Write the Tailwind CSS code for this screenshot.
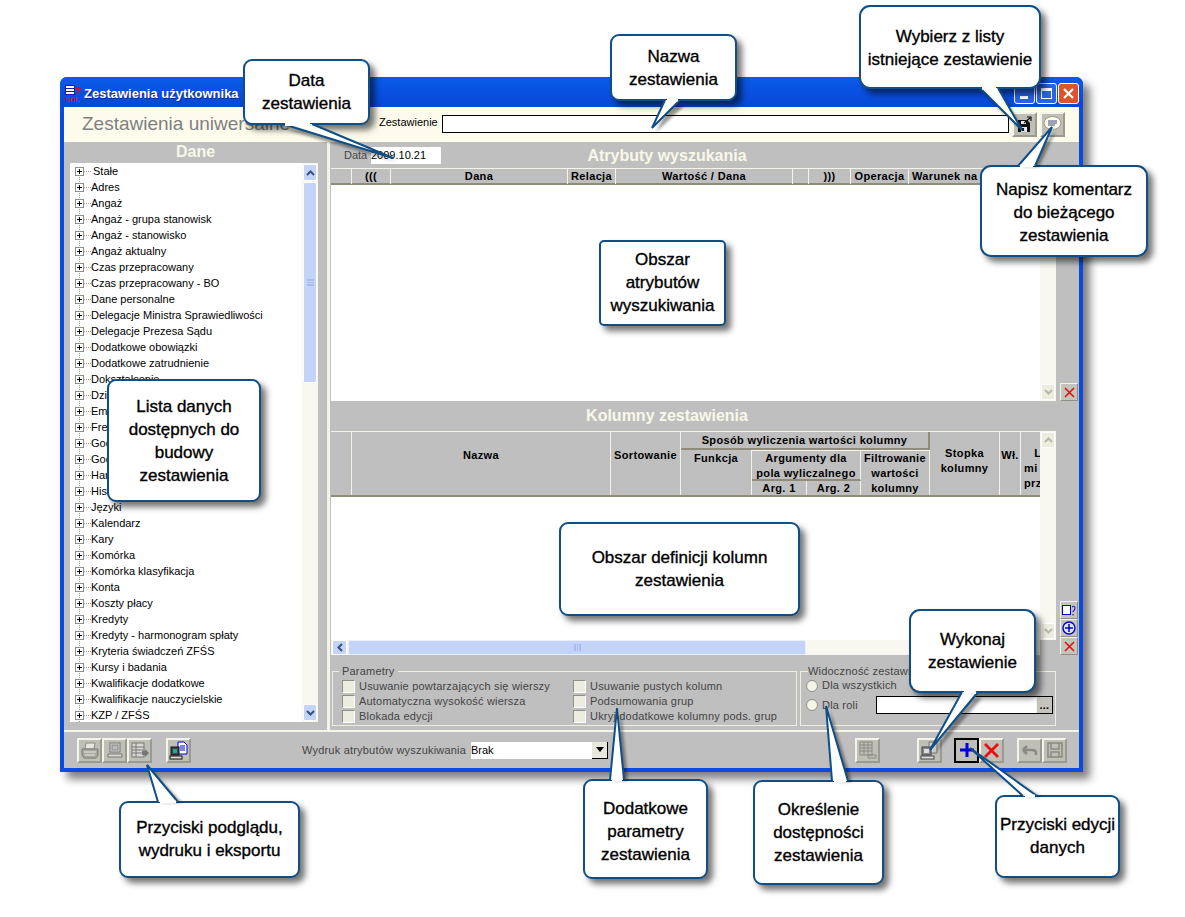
<!DOCTYPE html>
<html lang="pl">
<head>
  <meta charset="UTF-8" />
  <title>Zestawienia użytkownika</title>
  <script src="https://cdn.jsdelivr.net/npm/@tailwindcss/browser@4"></script>
</head>
<body class="bg-white font-['Liberation_Sans',Arial,sans-serif]">
<div class="relative w-[1185px] h-[917px] overflow-hidden bg-white pl-[60px] pt-[77px]">

  <!-- Window -->
  <div class="w-[1023px] h-[695px] flex flex-col border-x-4 border-b-4 border-[#0b4ce0] rounded-t-[7px] bg-[#bfbfbf] shadow-[7px_7px_8px_rgba(0,0,0,0.5)]">

    <!-- Title bar -->
    <div class="h-[30px] -mx-[4px] px-[5px] pt-[3px] flex items-center rounded-t-[7px] bg-gradient-to-b from-[#0a5ce8] via-[#0a50e0] to-[#0748d8]">
      <svg width="16" height="17" viewBox="0 0 16 17" class="mr-[3px]">
        <rect x="0.500" y="0.500" width="9" height="9" fill="#fff" stroke="#1a1aa0"/>
        <path d="M0 3.500h10M0 6.500h10" stroke="#1a1aa0"/>
        <path d="M11 4q2-2 4 0q0 2-2 3v2" stroke="#e01010" stroke-width="1.500" fill="none"/>
        <text x="0" y="16.500" font-size="7" font-weight="700" fill="#e01010" font-family="Liberation Sans">SQL</text>
      </svg>
      <span class="text-[13px] font-bold text-white [text-shadow:1px_1px_0_#0a2a90]">Zestawienia użytkownika</span>
      <div class="ml-auto flex gap-[1px] mt-[-1px] mr-[-1px]">
        <div class="w-[21px] h-[21px] rounded-[3px] border border-white bg-[#2a62e8] flex items-end pl-[5px] pb-[4px]"><div class="w-[8px] h-[3px] bg-white"></div></div>
        <div class="w-[21px] h-[21px] rounded-[3px] border border-white bg-[#2a62e8] flex items-center justify-center"><div class="w-[11px] h-[11px] border border-t-[3px] border-white"></div></div>
        <div class="w-[21px] h-[21px] rounded-[3px] border border-white bg-[#e0522c] flex items-center justify-center">
          <svg width="13" height="13" viewBox="0 0 13 13"><path d="M2 2l9 9M11 2l-9 9" stroke="#fff" stroke-width="2.200"/></svg>
        </div>
      </div>
    </div>

    <!-- Header -->
    <div class="h-[35px] bg-[#fdfcec] flex items-center">
      <span class="ml-[18px] w-[297px] text-[19px] text-[#808080] leading-none mt-[-2px]">Zestawienia uniwersalne</span>
      <span class="text-[11px] text-black w-[63px] mt-[-5px]">Zestawienie</span>
      <div class="w-[567px] h-[18px] bg-white border border-black mt-[-1px]"></div>
      <button class="ml-[3px] w-[25px] h-[25px] mt-[-1px] bg-[#bfbfb8] border-2 border-t-[#f4f4e8] border-l-[#f4f4e8] border-r-[#9a9a90] border-b-[#9a9a90] flex items-center justify-center">
        <svg width="15" height="16" viewBox="0 0 15 16"><path d="M1 4h9l3 3v9H1z" fill="#111"/><rect x="4" y="5" width="5" height="3" fill="#eee"/><rect x="4" y="11" width="6" height="5" fill="#eee"/><rect x="5" y="12" width="2" height="3" fill="#111"/><path d="M7 7l6-5M10 1h4v4" stroke="#111" stroke-width="1.200" fill="none"/></svg>
      </button>
      <button class="ml-[3px] w-[25px] h-[25px] mt-[-1px] bg-[#bfbfb8] border-2 border-t-[#f4f4e8] border-l-[#f4f4e8] border-r-[#9a9a90] border-b-[#9a9a90] flex items-center justify-center">
        <svg width="19" height="16" viewBox="0 0 19 16"><ellipse cx="9.500" cy="7" rx="8.500" ry="6.500" fill="#fbfbe8" stroke="#9a9a8c"/><path d="M5 5h9M5 7h9M5 9h7" stroke="#3a4a80"/><path d="M8 13l-1 3 4-3" fill="#fbfbe8" stroke="#9a9a8c"/></svg>
      </button>
    </div>

    <!-- Main -->
    <div class="flex h-[590px] border-b-2 border-[#f4f4e8]">

      <!-- Dane -->
      <div class="w-[263px] flex flex-col">
        <div class="h-[21px] text-center text-[16px] font-bold text-[#f8f8e8] leading-[20px]">Dane</div>
        <div class="ml-[6px] w-[248px] h-[559px] bg-white flex overflow-hidden">
          <div id="tree" class="w-[232px] relative">
            <div class="absolute left-[9px] top-[4px] bottom-0 border-l border-dotted border-[#999]"></div>
          </div>
          <div class="w-[16px] bg-[#f8f8f0] flex flex-col">
            <div class="h-[17px] m-[1px] mb-0 rounded-[2px] bg-[#c4d4f8] border border-white flex items-center justify-center">
              <svg width="9" height="6" viewBox="0 0 9 6"><path d="M1 5l3.500-3.500L8 5" stroke="#36507e" stroke-width="2" fill="none"/></svg>
            </div>
            <div class="h-[201px] m-[1px] rounded-[2px] bg-[#c4d4f8] border border-white flex items-center justify-center">
              <div class="w-[7px] h-[7px] border-y-2 border-[#a8bcf0] bg-[linear-gradient(#a8bcf0,#a8bcf0)] bg-[length:100%_1px] bg-center bg-no-repeat"></div>
            </div>
            <div class="mt-auto h-[17px] m-[1px] rounded-[2px] bg-[#c4d4f8] border border-white flex items-center justify-center">
              <svg width="9" height="6" viewBox="0 0 9 6"><path d="M1 1l3.500 3.500L8 1" stroke="#36507e" stroke-width="2" fill="none"/></svg>
            </div>
          </div>
        </div>
      </div>

      <!-- Right side -->
      <div class="w-[752px] border-l-[3px] border-[#f4f4e8] pl-[1px] flex flex-col">

        <!-- Attributes -->
        <div class="h-[26px] flex items-center">
          <span class="ml-[13px] w-[27px] text-[11px] text-[#444]">Data</span>
          <div class="w-[70px] h-[17px] bg-white text-[11px] text-black leading-[17px]">2009.10.21</div>
          <div class="w-[452px] text-center text-[16px] font-bold text-[#f8f8e8] mt-[1px]">Atrybuty wyszukania</div>
        </div>
        <div class="flex h-[233px]">
          <div class="w-[709px] flex flex-col">
            <div class="h-[17px] grid grid-cols-[21px_39px_177px_48px_177px_16px_42px_58px_111px] text-[11px] tracking-[0.35px] font-bold text-black text-center leading-[15px] border-t border-[#f4f4e8] border-b-2 border-b-[#8f8c7c]">
              <div class="border-r border-[#f4f4e8]"></div>
              <div class="border-r border-[#f4f4e8]">(((</div>
              <div class="border-r border-[#f4f4e8]">Dana</div>
              <div class="border-r border-[#f4f4e8]">Relacja</div>
              <div class="border-r border-[#f4f4e8]">Wartość / Dana</div>
              <div class="border-r border-[#f4f4e8]"></div>
              <div class="border-r border-[#f4f4e8]">)))</div>
              <div class="border-r border-[#f4f4e8]">Operacja</div>
              <div class="text-left pl-[3px] whitespace-nowrap">Warunek na</div>
            </div>
            <div class="flex-1 bg-white"></div>
          </div>
          <div class="w-[16px] bg-[#f8f8f0] flex flex-col justify-end pt-[17px]">
            <div class="h-[16px] mb-[1px] mx-[1px] rounded-[2px] bg-[#ededdf] border border-white flex items-center justify-center">
              <svg width="9" height="6" viewBox="0 0 9 6"><path d="M1 1l3.500 3.500L8 1" stroke="#b8b8ac" stroke-width="2" fill="none"/></svg>
            </div>
          </div>
          <div class="flex-1 flex flex-col justify-end pl-[4px]">
            <button class="w-[18px] h-[18px] bg-[#c4c4bc] border border-t-[#f4f4e8] border-l-[#f4f4e8] border-r-[#8f8f85] border-b-[#8f8f85] flex items-center justify-center">
              <svg width="11" height="11" viewBox="0 0 11 11"><path d="M1 1l9 9M10 1l-9 9" stroke="#e01010" stroke-width="1.600"/></svg>
            </button>
          </div>
        </div>

        <!-- Columns -->
        <div class="h-[30px] w-[672px] text-center text-[16px] font-bold text-[#f8f8e8] leading-[30px]">Kolumny zestawienia</div>
        <div class="flex h-[224px]">
          <div class="w-[709px] flex flex-col">
            <div class="h-[66px] grid grid-cols-[21px_259px_70px_71px_55px_54px_69px_70px_21px_19px] grid-rows-[18px_31px_17px] text-[11px] tracking-[0.35px] font-bold text-black text-center leading-[15px] overflow-hidden border-t border-[#f4f4e8] border-b-2 border-b-[#8f8c7c]">
              <div class="row-span-3 border-r border-[#f4f4e8]"></div>
              <div class="row-span-3 border-r border-[#f4f4e8] flex items-center justify-center pb-[20px]">Nazwa</div>
              <div class="row-span-3 border-r border-[#f4f4e8] flex items-center justify-center pb-[20px]">Sortowanie</div>
              <div class="col-span-4 border-r-2 border-r-[#8f8c7c] border-b-2 border-b-[#8f8c7c] pt-[1px]">Sposób wyliczenia wartości kolumny</div>
              <div class="row-span-3 border-r border-[#f4f4e8] flex items-center justify-center pb-[8px]">Stopka<br>kolumny</div>
              <div class="row-span-3 border-r border-[#f4f4e8] flex items-center justify-center pb-[20px]">Wł.</div>
              <div class="row-span-3 pt-[14px] text-left pl-[3px] whitespace-nowrap overflow-hidden">&nbsp;&nbsp;&nbsp;L<br>mi<br>prz</div>
              <div class="row-span-2 border-r border-[#f4f4e8] pt-[1px]">Funkcja</div>
              <div class="col-span-2 border-t border-t-[#f4f4e8] border-r border-r-[#f4f4e8] border-b-2 border-b-[#8f8c7c]">Argumenty dla<br>pola wyliczalnego</div>
              <div class="row-span-2 border-t border-t-[#f4f4e8] border-r border-r-[#f4f4e8]">Filtrowanie<br>wartości<br>kolumny</div>
              <div class="border-r border-[#f4f4e8] leading-[15px]">Arg. 1</div>
              <div class="border-r border-[#f4f4e8] leading-[15px]">Arg. 2</div>
            </div>
            <div class="h-[143px] bg-white"></div>
            <div class="h-[15px] flex bg-[#f8f8f0]">
              <div class="w-[15px] mx-[1px] rounded-[2px] bg-[#c4d4f8] border border-white flex items-center justify-center">
                <svg width="6" height="9" viewBox="0 0 6 9"><path d="M5 1L1.500 4.500 5 8" stroke="#36507e" stroke-width="2" fill="none"/></svg>
              </div>
              <div class="w-[458px] rounded-[2px] bg-[#c4d4f8] border border-[#e8eefc] flex items-center justify-center">
                <div class="w-[7px] h-[7px] border-x-2 border-[#a8bcf0] bg-[linear-gradient(#a8bcf0,#a8bcf0)] bg-[length:1px_100%] bg-center bg-no-repeat"></div>
              </div>
            </div>
          </div>
          <div class="w-[16px] h-[209px] bg-[#f8f8f0] flex flex-col justify-between">
            <div class="h-[16px] m-[1px] rounded-[2px] bg-[#ededdf] border border-white flex items-center justify-center">
              <svg width="9" height="6" viewBox="0 0 9 6"><path d="M1 5l3.500-3.500L8 5" stroke="#b8b8ac" stroke-width="2" fill="none"/></svg>
            </div>
            <div class="h-[16px] m-[1px] rounded-[2px] bg-[#ededdf] border border-white flex items-center justify-center">
              <svg width="9" height="6" viewBox="0 0 9 6"><path d="M1 1l3.500 3.500L8 1" stroke="#b8b8ac" stroke-width="2" fill="none"/></svg>
            </div>
          </div>
          <div class="flex-1 flex flex-col justify-end pl-[4px]">
            <button class="w-[18px] h-[18px] bg-[#c4c4bc] border border-t-[#f4f4e8] border-l-[#f4f4e8] border-r-[#8f8f85] border-b-[#8f8f85] flex items-center justify-center">
              <svg width="14" height="12" viewBox="0 0 14 12"><rect x="0.500" y="1.500" width="8" height="9" fill="#fff" stroke="#0000c0"/><path d="M10 3q3-2 3 1t-2 3v1M11 10v1.500" stroke="#0000c0" fill="none"/></svg>
            </button>
            <button class="w-[18px] h-[18px] bg-[#c4c4bc] border border-t-[#f4f4e8] border-l-[#f4f4e8] border-r-[#8f8f85] border-b-[#8f8f85] flex items-center justify-center">
              <svg width="14" height="14" viewBox="0 0 14 14"><circle cx="7" cy="7" r="6" fill="#dfe6ff" stroke="#0000c8" stroke-width="1.400"/><path d="M7 3v8M3 7h8" stroke="#0000c8" stroke-width="1.500"/></svg>
            </button>
            <button class="w-[18px] h-[18px] bg-[#c4c4bc] border border-t-[#f4f4e8] border-l-[#f4f4e8] border-r-[#8f8f85] border-b-[#8f8f85] flex items-center justify-center">
              <svg width="11" height="11" viewBox="0 0 11 11"><path d="M1 1l9 9M10 1l-9 9" stroke="#e01010" stroke-width="1.600"/></svg>
            </button>
          </div>
        </div>

        <!-- Groups -->
        <div class="flex gap-[3px] mt-[10px] text-[11px] tracking-[0.2px] text-[#444] leading-[15px]">
          <fieldset class="ml-[1px] w-[465px] h-[61px] border border-[#eeeee0] px-[9px] pt-[1px]">
            <legend class="-ml-[3px] px-[3px] leading-[13px]">Parametry</legend>
            <div class="grid grid-cols-[231px_1fr]">
              <label class="flex items-center gap-[4px]"><span class="w-[13px] h-[13px] bg-[#ecece0] border border-t-[#8f8f85] border-l-[#8f8f85] border-white"></span>Usuwanie powtarzających się wierszy</label>
              <label class="flex items-center gap-[4px]"><span class="w-[13px] h-[13px] bg-[#ecece0] border border-t-[#8f8f85] border-l-[#8f8f85] border-white"></span>Usuwanie pustych kolumn</label>
              <label class="flex items-center gap-[4px]"><span class="w-[13px] h-[13px] bg-[#ecece0] border border-t-[#8f8f85] border-l-[#8f8f85] border-white"></span>Automatyczna wysokość wiersza</label>
              <label class="flex items-center gap-[4px]"><span class="w-[13px] h-[13px] bg-[#ecece0] border border-t-[#8f8f85] border-l-[#8f8f85] border-white"></span>Podsumowania grup</label>
              <label class="flex items-center gap-[4px]"><span class="w-[13px] h-[13px] bg-[#ecece0] border border-t-[#8f8f85] border-l-[#8f8f85] border-white"></span>Blokada edycji</label>
              <label class="flex items-center gap-[4px]"><span class="w-[13px] h-[13px] bg-[#ecece0] border border-t-[#8f8f85] border-l-[#8f8f85] border-white"></span>Ukryj dodatkowe kolumny pods. grup</label>
            </div>
          </fieldset>
          <fieldset class="w-[256px] h-[61px] border border-[#eeeee0] pl-[5px]">
            <legend class="ml-[2px] leading-[13px]">Widoczność zestawienia</legend>
            <div class="flex items-center gap-[4px] h-[15px]"><span class="w-[12px] h-[12px] rounded-full bg-[#f4f4e8] border border-[#8f8f85]"></span>Dla wszystkich</div>
            <div class="flex items-center gap-[4px] mt-[3px] h-[18px]">
              <span class="w-[12px] h-[12px] rounded-full bg-[#f4f4e8] border border-[#8f8f85]"></span><span class="w-[50px]">Dla roli</span>
              <div class="w-[177px] h-[18px] bg-white border border-black flex justify-end">
                <div class="w-[16px] bg-[#c4c4bc] border-l border-[#f4f4e8] text-black text-[11px] font-bold text-center leading-[17px]">...</div>
              </div>
            </div>
          </fieldset>
        </div>
      </div>
    </div>

    <!-- Bottom bar -->
    <div class="flex-1 flex items-center pl-[13px] text-[11px] text-[#444]">
      <button class="w-[25px] h-[25px] bg-[#bfbfb8] border-2 border-t-[#f4f4e8] border-l-[#f4f4e8] border-r-[#9a9a90] border-b-[#9a9a90] flex items-center justify-center">
        <svg width="18" height="17" viewBox="0 0 18 17"><path d="M5 1h9l-1 6H4z" fill="#e8e8e0" stroke="#8a8a80"/><path d="M1 7h16v6l-2 3H3l-2-3z" fill="#a8a8a0" stroke="#7a7a70"/><path d="M3 10h12M4 13h10" stroke="#e8e8e0"/></svg>
      </button>
      <button class="w-[25px] h-[25px] bg-[#bfbfb8] border-2 border-t-[#f4f4e8] border-l-[#f4f4e8] border-r-[#9a9a90] border-b-[#9a9a90] flex items-center justify-center">
        <svg width="16" height="16" viewBox="0 0 16 16"><rect x="3" y="1" width="10" height="9" fill="#d8d8d0" stroke="#777"/><rect x="5" y="3" width="6" height="5" fill="#bbb" stroke="#888"/><path d="M1 12h14v3H1z" fill="#d8d8d0" stroke="#777"/></svg>
      </button>
      <button class="w-[25px] h-[25px] bg-[#bfbfb8] border-2 border-t-[#f4f4e8] border-l-[#f4f4e8] border-r-[#9a9a90] border-b-[#9a9a90] flex items-center justify-center">
        <svg width="18" height="17" viewBox="0 0 18 17"><rect x="1" y="1" width="12" height="14" fill="#d8d8d0" stroke="#777"/><path d="M1 5h12M1 8h12M1 11h12M5 1v14" stroke="#777"/><path d="M11 9h3V7l4 4-4 4v-2h-3z" fill="#777"/></svg>
      </button>
      <button class="ml-[14px] w-[25px] h-[25px] bg-[#bfbfb8] border-2 border-t-[#f4f4e8] border-l-[#f4f4e8] border-r-[#9a9a90] border-b-[#9a9a90] flex items-center justify-center">
        <svg width="19" height="19" viewBox="0 0 19 19"><path d="M9 1h6l3 3v9H9z" fill="#fff" stroke="#0000d0"/><path d="M11 5h5M11 7h5M11 9h5" stroke="#0000d0"/><rect x="2" y="6" width="8" height="8" fill="#444" stroke="#111"/><rect x="4" y="8" width="4" height="4" fill="#10b0a0"/><rect x="1" y="15" width="12" height="3" fill="#ddd" stroke="#111"/></svg>
      </button>
      <span class="ml-[111px] w-[169px] tracking-[0.2px] whitespace-nowrap">Wydruk atrybutów wyszukiwania</span>
      <div class="w-[137px] h-[17px] bg-white flex justify-between text-black leading-[17px]">Brak
        <div class="w-[16px] h-[17px] bg-[#e8e8dc] border-r border-b border-black flex items-center justify-center">
          <svg width="8" height="5" viewBox="0 0 8 5"><path d="M0 0h8L4 5z" fill="#000"/></svg>
        </div>
      </div>
      <button class="ml-[247px] w-[25px] h-[25px] bg-[#bfbfb8] border-2 border-t-[#f4f4e8] border-l-[#f4f4e8] border-r-[#9a9a90] border-b-[#9a9a90] flex items-center justify-center">
        <svg width="18" height="18" viewBox="0 0 18 18"><rect x="1" y="1" width="12" height="13" fill="none" stroke="#8a8a80"/><path d="M1 4h12M1 7h12M1 10h12M5 1v13M9 1v13M9 14h8v3H9z" stroke="#8a8a80" fill="none"/></svg>
      </button>
      <button class="ml-[37px] w-[25px] h-[25px] bg-[#bfbfb8] border-2 border-t-[#f4f4e8] border-l-[#f4f4e8] border-r-[#9a9a90] border-b-[#9a9a90] flex items-center justify-center">
        <svg width="19" height="19" viewBox="0 0 19 19"><path d="M9 1h8v11H9z" fill="#d0d0c8" stroke="#777"/><rect x="2" y="6" width="9" height="8" fill="#888" stroke="#444"/><rect x="4" y="8" width="5" height="4" fill="#ddd"/><rect x="1" y="15" width="13" height="3" fill="#ddd" stroke="#444"/></svg>
      </button>
      <button class="ml-[12px] w-[25px] h-[25px] bg-[#bfbfb8] border-2 border-black flex items-center justify-center">
        <svg width="16" height="16" viewBox="0 0 16 16"><path d="M8 1v14M1 8h14" stroke="#0000e0" stroke-width="3"/></svg>
      </button>
      <button class="w-[25px] h-[25px] bg-[#bfbfb8] border-2 border-t-[#f4f4e8] border-l-[#f4f4e8] border-r-[#9a9a90] border-b-[#9a9a90] flex items-center justify-center">
        <svg width="15" height="15" viewBox="0 0 15 15"><path d="M1 1l13 13M14 1L1 14" stroke="#e81010" stroke-width="2.800"/></svg>
      </button>
      <button class="ml-[13px] w-[25px] h-[25px] bg-[#bfbfb8] border-2 border-t-[#f4f4e8] border-l-[#f4f4e8] border-r-[#9a9a90] border-b-[#9a9a90] flex items-center justify-center">
        <svg width="17" height="12" viewBox="0 0 17 12"><path d="M2 6h9q4 0 4 3v2M2 6l4-4M2 6l4 4" stroke="#8a8a80" stroke-width="2.500" fill="none"/></svg>
      </button>
      <button class="w-[25px] h-[25px] bg-[#bfbfb8] border-2 border-t-[#f4f4e8] border-l-[#f4f4e8] border-r-[#9a9a90] border-b-[#9a9a90] flex items-center justify-center">
        <svg width="16" height="16" viewBox="0 0 16 16"><path d="M1 1h14v14H1z" fill="none" stroke="#8a8a80" stroke-width="1.500"/><path d="M4 1v6h8V1M4 15v-5h8v5" fill="none" stroke="#8a8a80" stroke-width="1.500"/></svg>
      </button>
    </div>
  </div>

  <!-- Callouts -->
  <div class="absolute left-[243px] top-[59px] w-[127px] h-[66px] pt-[8px] rounded-[9px] border-2 border-[#0f4f86] bg-white shadow-[5px_5px_6px_rgba(0,0,0,0.55)] text-center text-[17px] leading-[23px] text-black [-webkit-text-stroke:0.35px_black]">Data<br>zestawienia</div>
  <div class="absolute left-[610px] top-[34px] w-[127px] h-[67px] pt-[9px] rounded-[9px] border-2 border-[#0f4f86] bg-white shadow-[5px_5px_6px_rgba(0,0,0,0.55)] text-center text-[17px] leading-[23px] text-black [-webkit-text-stroke:0.35px_black]">Nazwa<br>zestawienia</div>
  <div class="absolute left-[859px] top-[5px] w-[182px] h-[84px] pt-[18px] rounded-[11px] border-2 border-[#0f4f86] bg-white shadow-[5px_5px_6px_rgba(0,0,0,0.55)] text-center text-[17px] leading-[23px] text-black [-webkit-text-stroke:0.35px_black]">Wybierz z listy<br>istniejące zestawienie</div>
  <div class="absolute left-[980px] top-[165px] w-[168px] h-[92px] pt-[11px] rounded-[11px] border-2 border-[#0f4f86] bg-white shadow-[5px_5px_6px_rgba(0,0,0,0.55)] text-center text-[17px] leading-[23px] text-black [-webkit-text-stroke:0.35px_black]">Napisz komentarz<br>do bieżącego<br>zestawienia</div>
  <div class="absolute left-[599px] top-[240px] w-[127px] h-[86px] pt-[6px] rounded-[5px] border-2 border-[#0f4f86] bg-white shadow-[5px_5px_6px_rgba(0,0,0,0.55)] text-center text-[17px] leading-[23px] text-black [-webkit-text-stroke:0.35px_black]">Obszar<br>atrybutów<br>wyszukiwania</div>
  <div class="absolute left-[107px] top-[379px] w-[154px] h-[123px] pt-[14px] rounded-[9px] border-2 border-[#0f4f86] bg-white shadow-[5px_5px_6px_rgba(0,0,0,0.55)] text-center text-[17px] leading-[23px] text-black [-webkit-text-stroke:0.35px_black]">Lista danych<br>dostępnych do<br>budowy<br>zestawienia</div>
  <div class="absolute left-[559px] top-[522px] w-[241px] h-[94px] pt-[22px] rounded-[9px] border-2 border-[#0f4f86] bg-white shadow-[5px_5px_6px_rgba(0,0,0,0.55)] text-center text-[17px] leading-[23px] text-black [-webkit-text-stroke:0.35px_black]">Obszar definicji kolumn<br>zestawienia</div>
  <div class="absolute left-[909px] top-[609px] w-[127px] h-[84px] pt-[17px] rounded-[11px] border-2 border-[#0f4f86] bg-white shadow-[5px_5px_6px_rgba(0,0,0,0.55)] text-center text-[17px] leading-[23px] text-black [-webkit-text-stroke:0.35px_black]">Wykonaj<br>zestawienie</div>
  <div class="absolute left-[119px] top-[801px] w-[181px] h-[77px] pt-[13px] rounded-[9px] border-2 border-[#0f4f86] bg-white shadow-[5px_5px_6px_rgba(0,0,0,0.55)] text-center text-[17px] leading-[23px] text-black [-webkit-text-stroke:0.35px_black]">Przyciski podglądu,<br>wydruku i eksportu</div>
  <div class="absolute left-[583px] top-[779px] w-[125px] h-[100px] pt-[16px] rounded-[9px] border-2 border-[#0f4f86] bg-white shadow-[5px_5px_6px_rgba(0,0,0,0.55)] text-center text-[17px] leading-[23px] text-black [-webkit-text-stroke:0.35px_black]">Dodatkowe<br>parametry<br>zestawienia</div>
  <div class="absolute left-[753px] top-[780px] w-[131px] h-[105px] pt-[16px] rounded-[9px] border-2 border-[#0f4f86] bg-white shadow-[5px_5px_6px_rgba(0,0,0,0.55)] text-center text-[17px] leading-[23px] text-black [-webkit-text-stroke:0.35px_black]">Określenie<br>dostępności<br>zestawienia</div>
  <div class="absolute left-[995px] top-[795px] w-[125px] h-[83px] pt-[16px] rounded-[9px] border-2 border-[#0f4f86] bg-white shadow-[5px_5px_6px_rgba(0,0,0,0.55)] text-center text-[17px] leading-[23px] text-black [-webkit-text-stroke:0.35px_black] whitespace-nowrap">Przyciski edycji<br>danych</div>

  <!-- Callout tails -->
  <svg class="absolute left-0 top-0" width="1185" height="917" viewBox="0 0 1185 917">
    <defs><filter id="b" x="-20%" y="-20%" width="140%" height="140%"><feGaussianBlur stdDeviation="1.500"/></filter></defs>
    <g fill="#000" opacity="0.4" filter="url(#b)" transform="translate(4,4)">
      <path d="M283 126L312 126L393 158z"/><path d="M665 102L680 102L652 128z"/><path d="M980 90L998 90L1022 130z"/><path d="M1018 163L1035 163L1052 127z"/>
      <path d="M962 694L978 694L930 750z"/><path d="M158 799L178 799L147 765z"/><path d="M610 777L624 777L617 708z"/><path d="M832 778L848 778L826 706z"/><path d="M1023 793L1037 793L970 748z"/>
    </g>
    <g fill="#fff" stroke="#0f4f86" stroke-width="2" stroke-linejoin="miter">
      <path d="M283 124L393 158L312 124"/>
      <path d="M665 100L652 128L680 100"/>
      <path d="M980 88L1022 130L998 88"/>
      <path d="M1018 166L1052 127L1035 166"/>
      <path d="M962 692L930 750L978 692"/>
      <path d="M158 802L147 765L178 802"/>
      <path d="M610 780L617 708L624 780"/>
      <path d="M832 781L826 706L848 781"/>
      <path d="M1023 796L970 748L1037 796"/>
    </g>
    <g stroke="#fff" stroke-width="3">
      <path d="M285 124.500H310"/><path d="M667 100H678"/><path d="M982 88H996"/><path d="M1020 166H1033"/><path d="M964 692.500H976"/><path d="M160 802H176"/><path d="M612 780H622"/><path d="M834 781H846"/><path d="M1025 796H1035"/>
    </g>
  </svg>
</div>

<script>
  const items = ["Stałe","Adres","Angaż","Angaż - grupa stanowisk","Angaż - stanowisko","Angaż aktualny","Czas przepracowany","Czas przepracowany - BO","Dane personalne","Delegacje Ministra Sprawiedliwości","Delegacje Prezesa Sądu","Dodatkowe obowiązki","Dodatkowe zatrudnienie","Dokształcenie","Dzieci","Emerytury","Frekwencja","Godziny","Godziny nadliczbowe","Harmonogram","Historia","Języki","Kalendarz","Kary","Komórka","Komórka klasyfikacja","Konta","Koszty płacy","Kredyty","Kredyty - harmonogram spłaty","Kryteria świadczeń ZFŚS","Kursy i badania","Kwalifikacje dodatkowe","Kwalifikacje nauczycielskie","KZP / ZFŚS"];
  const tree = document.getElementById("tree");
  items.forEach((name, i) => {
    const row = document.createElement("div");
    row.className = "h-[16px] flex items-center text-[11px] text-black whitespace-nowrap pl-[5px]";
    row.innerHTML = `
      <span class="w-[9px] h-[9px] border border-[#8f8f85] bg-white flex items-center justify-center relative">
        <span class="absolute w-[5px] h-[1px] bg-black"></span><span class="absolute w-[1px] h-[5px] bg-black"></span>
      </span>
      <span class="w-[7px] border-t border-dotted border-[#999]"></span>
      <span class="${i === 0 ? "ml-[2px]" : ""}">${name}</span>`;
    tree.appendChild(row);
  });
</script>
</body>
</html>
